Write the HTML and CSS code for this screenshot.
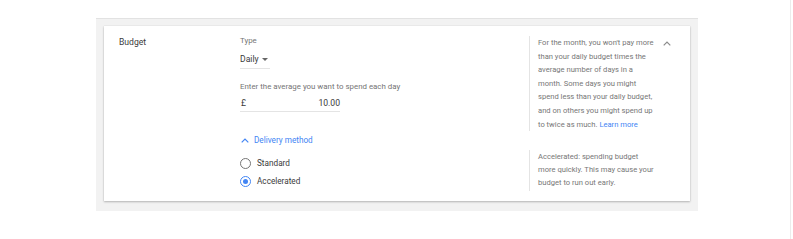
FILE: index.html
```html
<!DOCTYPE html>
<html lang="en">
<head>
<meta charset="UTF-8">
<meta name="viewport" content="width=device-width, initial-scale=1.0">
<title>Budget</title>
<link rel="stylesheet" href="styles.css">
</head>
<body>
<div class="frame">
    <div class="panel">
        <div class="card">
            <div class="section budget">
                <div class="label">Budget</div>
                <div class="fields">
                    <div class="small-label">Type</div>
                    <div class="dropdown">Daily <span class="caret"></span></div>
                    <div class="small-label hint">Enter the average you want to spend each day</div>
                    <div class="amount">
                        <span>£</span>
                        <span>10.00</span>
                    </div>
                </div>
                <div class="help help-top">
                    <p>For the month, you won't pay more than your daily budget times the average number of days in a month. Some days you might spend less than your daily budget, and on others you might spend up to twice as much. <a href="#">Learn more</a></p>
                    <svg class="collapse" width="8" height="5" viewBox="0 0 8 5">
                        <polyline points="0.7,4.3 4,1 7.3,4.3" fill="none" stroke="#8a8a8a" stroke-width="1.2"/>
                    </svg>
                </div>
            </div>
            <div class="section delivery">
                <div></div>
                <div class="fields">
                    <div class="toggle">
                        <svg width="8" height="5" viewBox="0 0 8 5">
                            <polyline points="0.7,4.3 4,1 7.3,4.3" fill="none" stroke="#4285f4" stroke-width="1.2"/>
                        </svg>
                        <span>Delivery method</span>
                    </div>
                    <div class="radios">
                        <label class="radio"><span class="circle"></span>Standard</label>
                        <label class="radio checked"><span class="circle"></span>Accelerated</label>
                    </div>
                </div>
                <div class="help help-bottom">
                    <p>Accelerated: spending budget more quickly. This may cause your budget to run out early.</p>
                </div>
            </div>
        </div>
    </div>
</div>
</body>
</html>
```

FILE: styles.css
```css
body {
    margin: 0;
    background-color: #fff;
    font-family: Roboto, "Liberation Sans", Arial, sans-serif;
    color: #333;
}

.frame {
    width: 791px;
    height: 239px;
    border-right: 1px solid #ececec;
    padding-top: 18px;
    box-sizing: border-box;
}

.panel {
    margin-left: 96px;
    width: 602px;
    height: 193px;
    background-color: #f2f2f2;
    border-top: 1px solid #e2e2e2;
    padding: 7px 8px 0 8px;
    box-sizing: border-box;
}

.card {
    background-color: #fff;
    height: 175px;
    box-shadow: 0 1px 2px rgba(0, 0, 0, 0.25), 0 0 1px rgba(0, 0, 0, 0.12);
    padding-top: 10px;
    box-sizing: border-box;
}

.section {
    display: grid;
    grid-template-columns: 136px 289px 161px;
}

.budget {
    height: 91px;
}

.label {
    padding-left: 15px;
    font-size: 8.6px;
    line-height: 12px;
    color: #3a3a3a;
}

.small-label {
    font-size: 7.9px;
    line-height: 10px;
    color: #757575;
}

.dropdown {
    margin-top: 7px;
    width: 30px;
    padding-bottom: 3px;
    border-bottom: 1px solid #e4e4e4;
    font-size: 8.6px;
    line-height: 12px;
    display: flex;
    align-items: center;
    gap: 3px;
    color: #3a3a3a;
}

.caret {
    width: 0;
    height: 0;
    border-left: 3px solid transparent;
    border-right: 3px solid transparent;
    border-top: 3px solid #666;
}

.hint {
    margin-top: 13px;
}

.amount {
    margin-top: 5px;
    width: 100px;
    padding-bottom: 2px;
    border-bottom: 1px solid #e4e4e4;
    display: flex;
    justify-content: space-between;
    font-size: 8.6px;
    line-height: 12px;
    padding-left: 1px;
    box-sizing: border-box;
    color: #3a3a3a;
}

.help {
    border-left: 1px solid #e4e4e4;
    padding-left: 8px;
    display: flex;
    align-items: flex-start;
    font-size: 7.6px;
    color: #777;
}

.help p {
    margin: 0;
    width: 118.5px;
}

.help a {
    color: #4285f4;
    text-decoration: none;
}

.help-top {
    line-height: 13.6px;
}

.collapse {
    margin-left: auto;
    margin-right: 19px;
    margin-top: 5px;
}

.help-bottom {
    margin-top: 23px;
    height: 41px;
    line-height: 12.8px;
}

.help-bottom p {
    margin-top: 1px;
}

.toggle {
    margin-top: 8px;
    display: flex;
    align-items: center;
    gap: 5px;
    color: #4285f4;
    font-size: 8.2px;
    line-height: 10px;
    padding-left: 1px;
}

.radios {
    margin-top: 11px;
    display: flex;
    flex-direction: column;
    gap: 4px;
}

.radio {
    display: flex;
    align-items: center;
    gap: 6px;
    font-size: 8.2px;
    line-height: 14px;
    color: #3a3a3a;
}

.circle {
    width: 11px;
    height: 11px;
    border: 1.3px solid #757575;
    border-radius: 50%;
    box-sizing: border-box;
    display: flex;
    align-items: center;
    justify-content: center;
}

.checked .circle {
    border-color: #4285f4;
}

.checked .circle::after {
    content: "";
    width: 5px;
    height: 5px;
    border-radius: 50%;
    background-color: #4285f4;
}
```
